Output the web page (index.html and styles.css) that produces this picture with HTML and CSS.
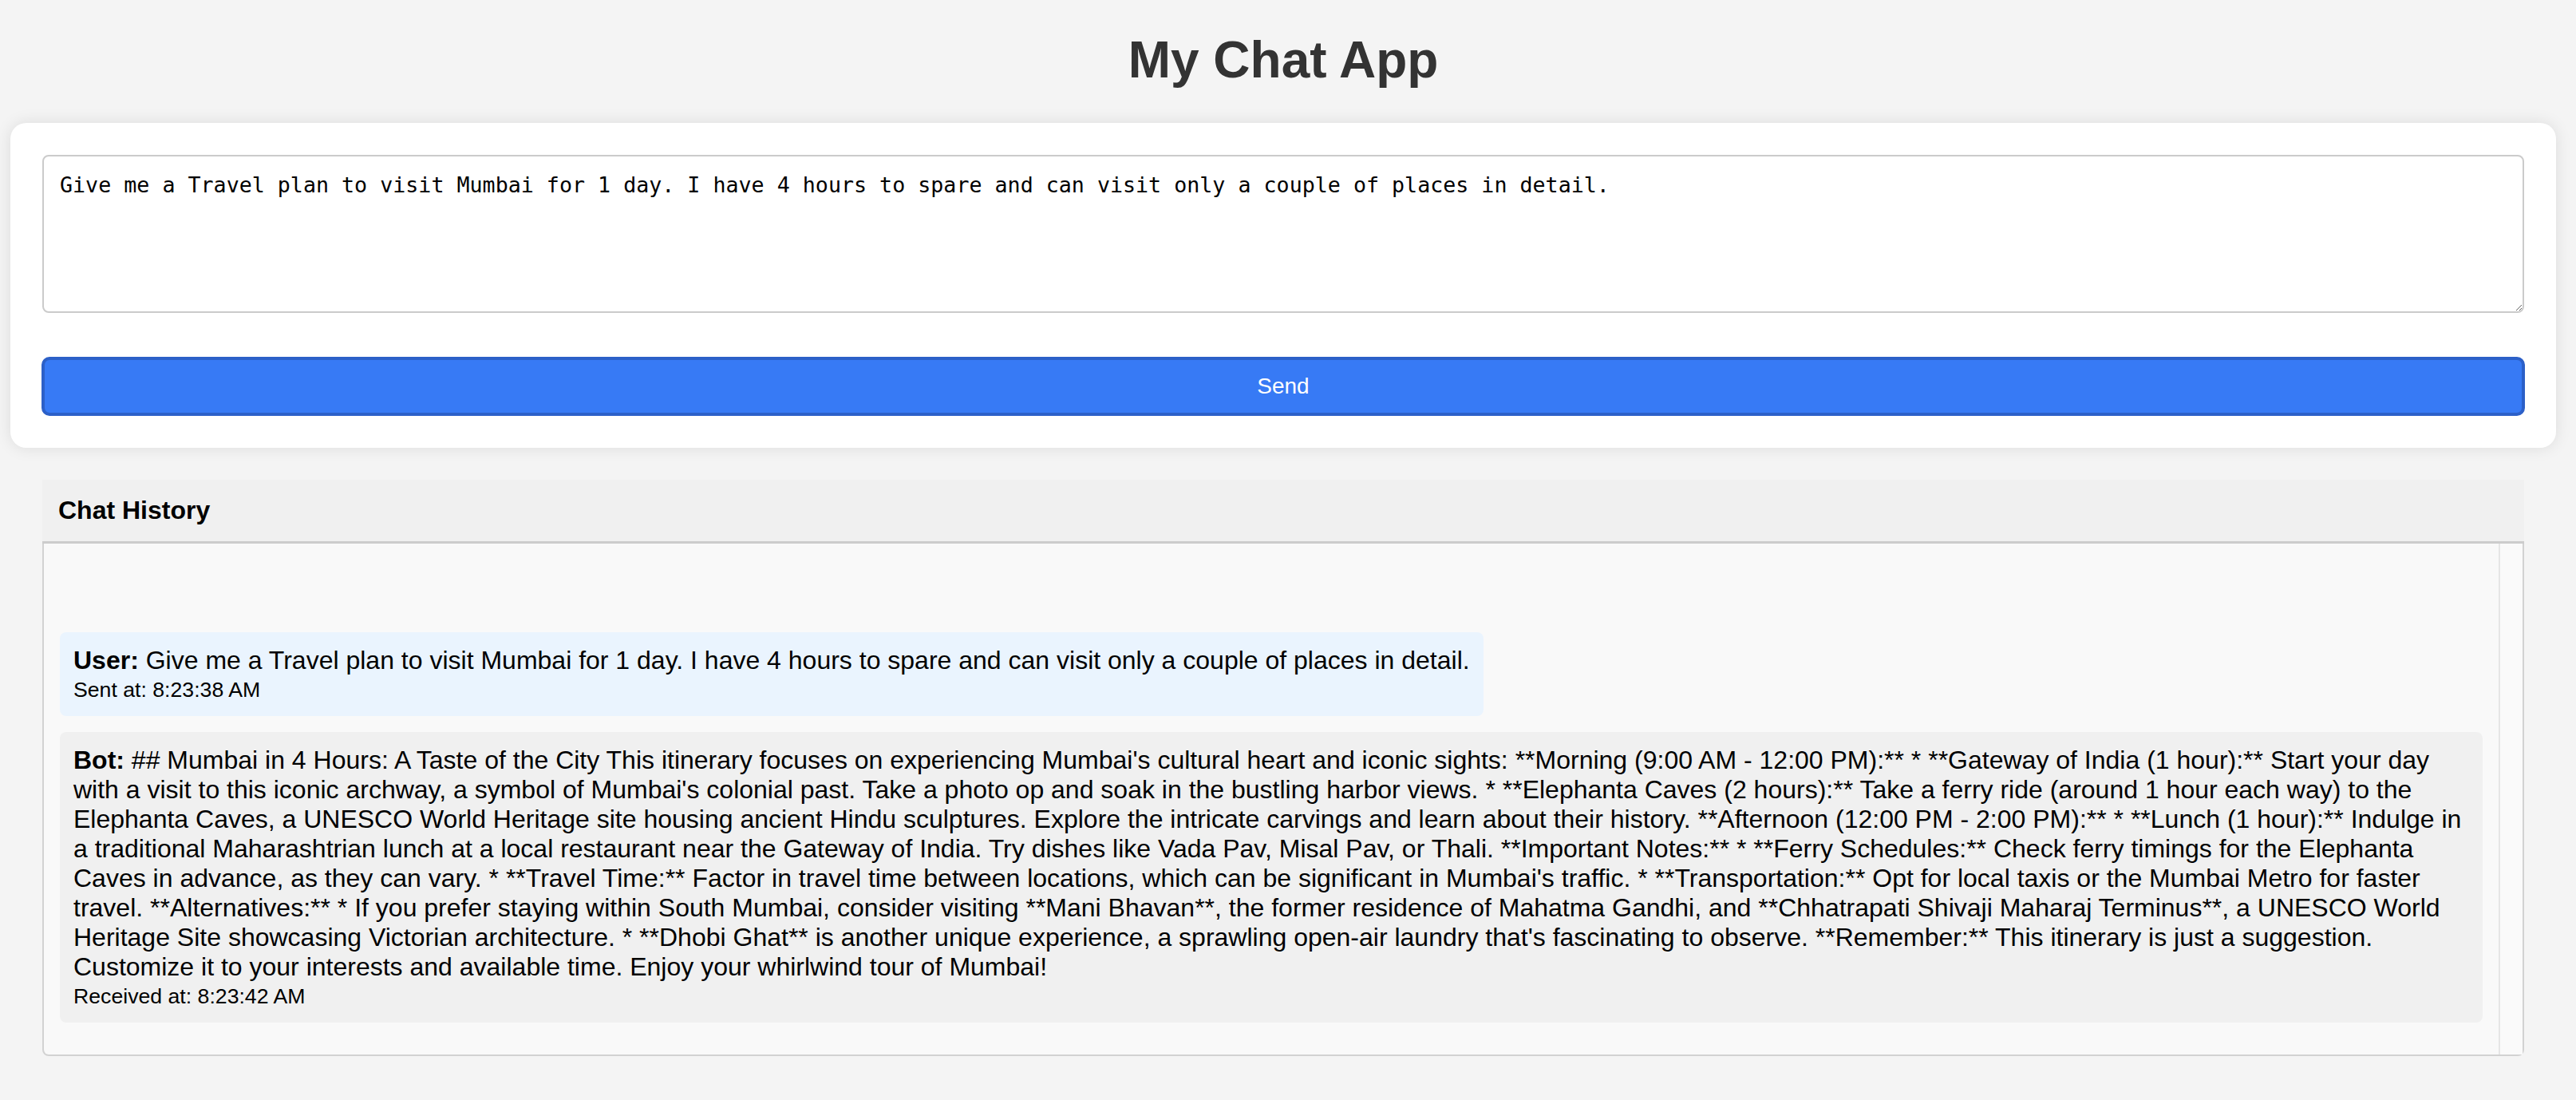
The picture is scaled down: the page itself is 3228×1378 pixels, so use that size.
FILE: index.html
```html
<!DOCTYPE html>
<html lang="en">
<head>
<meta charset="utf-8">
<title>My Chat App</title>
<link rel="stylesheet" href="styles.css">
</head>
<body>
<div class="page">
  <h1 class="title">My Chat App</h1>
  <div class="card">
    <textarea class="prompt">Give me a Travel plan to visit Mumbai for 1 day. I have 4 hours to spare and can visit only a couple of places in detail.</textarea>
    <button class="send">Send</button>
  </div>
  <section class="history">
    <div class="history-header">Chat History</div>
    <div class="history-box">
      <div class="messages">
        <div class="msg msg-user">
          <div class="msg-text"><strong>User:</strong> Give me a Travel plan to visit Mumbai for 1 day. I have 4 hours to spare and can visit only a couple of places in detail.</div>
          <div class="msg-time">Sent at: 8:23:38 AM</div>
        </div>
        <div class="msg msg-bot">
          <div class="msg-text"><strong>Bot:</strong> ## Mumbai in 4 Hours: A Taste of the City This itinerary focuses on experiencing Mumbai's cultural heart and iconic sights: **Morning (9:00 AM - 12:00 PM):** * **Gateway of India (1 hour):** Start your day with a visit to this iconic archway, a symbol of Mumbai's colonial past. Take a photo op and soak in the bustling harbor views. * **Elephanta Caves (2 hours):** Take a ferry ride (around 1 hour each way) to the Elephanta Caves, a UNESCO World Heritage site housing ancient Hindu sculptures. Explore the intricate carvings and learn about their history. **Afternoon (12:00 PM - 2:00 PM):** * **Lunch (1 hour):** Indulge in a traditional Maharashtrian lunch at a local restaurant near the Gateway of India. Try dishes like Vada Pav, Misal Pav, or Thali. **Important Notes:** * **Ferry Schedules:** Check ferry timings for the Elephanta Caves in advance, as they can vary. * **Travel Time:** Factor in travel time between locations, which can be significant in Mumbai's traffic. * **Transportation:** Opt for local taxis or the Mumbai Metro for faster travel. **Alternatives:** * If you prefer staying within South Mumbai, consider visiting **Mani Bhavan**, the former residence of Mahatma Gandhi, and **Chhatrapati Shivaji Maharaj Terminus**, a UNESCO World Heritage Site showcasing Victorian architecture. * **Dhobi Ghat** is another unique experience, a sprawling open-air laundry that's fascinating to observe. **Remember:** This itinerary is just a suggestion. Customize it to your interests and available time. Enjoy your whirlwind tour of Mumbai!</div>
          <div class="msg-time">Received at: 8:23:42 AM</div>
        </div>
      </div>
      <div class="scroll-track"></div>
    </div>
  </section>
</div>
</body>
</html>
```
FILE: styles.css
```css
html, body {
  margin: 0;
  padding: 0;
  background: #f4f4f4;
}

body {
  font-family: "Liberation Sans", Arial, Helvetica, sans-serif;
  color: #000;
}

.page {
  padding: 0 25px 0 13px;
}

.title {
  margin: 38px 0 42px;
  font-size: 64px;
  line-height: 74px;
  font-weight: bold;
  text-align: center;
  color: #333;
}

.card {
  background: #fff;
  border-radius: 20px;
  box-shadow: 0 0 20px rgba(0, 0, 0, 0.1);
  padding: 40px;
  display: flex;
  flex-direction: column;
  gap: 55px;
}

.prompt {
  display: block;
  box-sizing: border-box;
  width: 100%;
  height: 198px;
  margin: 0;
  padding: 20px;
  border: 2px solid #cbcbcb;
  border-radius: 8px;
  background: #fff;
  color: #000;
  font-family: "DejaVu Sans Mono", monospace;
  font-size: 26.67px;
  line-height: 31px;
  resize: vertical;
}

.send {
  display: block;
  box-sizing: border-box;
  width: calc(100% + 2px);
  margin: 0 -1px;
  height: 74px;
  border: 4px solid #2c60c8;
  border-radius: 10px;
  background: #377af5;
  color: #fff;
  font-family: "Liberation Sans", Arial, Helvetica, sans-serif;
  font-size: 28px;
}

.history {
  margin: 40px 40px 0;
}

.history-header {
  background: #f0f0f0;
  padding: 20px;
  font-size: 32px;
  line-height: 37px;
  font-weight: bold;
  color: #000;
  border-bottom: 3px solid #cccccc;
}

.history-box {
  display: flex;
  height: 640px;
  background: #f9f9f9;
  border: 2px solid #d2d2d2;
  border-top: none;
  border-radius: 0 0 8px 8px;
}

.messages {
  flex: 1;
  min-width: 0;
  padding: 20px;
  display: flex;
  flex-direction: column;
  justify-content: flex-end;
}

.scroll-track {
  width: 28px;
  background: #fafafa;
  border-left: 2px solid #e6e6e6;
}

.msg {
  align-self: flex-start;
  max-width: 100%;
  box-sizing: border-box;
  padding: 17px;
  border-radius: 8px;
  margin-bottom: 20px;
}

.msg-user {
  background: #eaf4fe;
}

.msg-bot {
  background: #f0f0f0;
}

.msg-text {
  font-size: 32px;
  line-height: 37px;
}

.msg-time {
  margin-top: 3px;
  font-size: 26.67px;
  line-height: 31px;
}
```
